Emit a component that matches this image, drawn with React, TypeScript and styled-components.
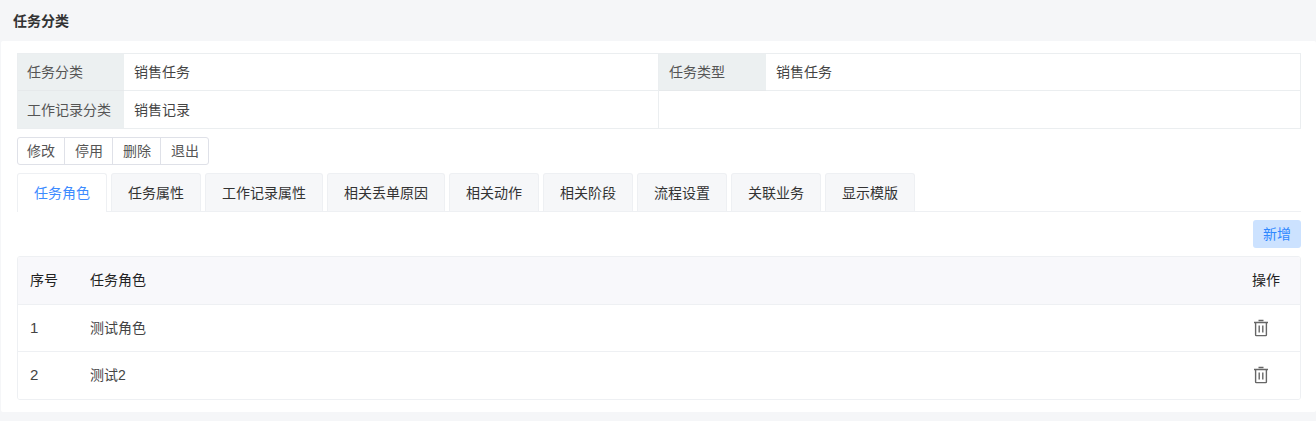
import React from 'react';
import styled, { createGlobalStyle } from 'styled-components';

const Global = createGlobalStyle`
  html, body { margin: 0; padding: 0; background: #f5f6f8; }
  body { font-family: "Liberation Sans", "Noto Sans CJK SC", sans-serif; font-size: 14px; line-height: 20px; color: #333; }
  * { box-sizing: border-box; }
`;

const Page = styled.div`
  width: 1316px;
  height: 421px;
  background: #f5f6f8;
  display: flex;
  flex-direction: column;
  overflow: hidden;
`;

const Header = styled.div`
  height: 41px;
  padding: 0 13px;
  display: flex;
  align-items: center;
  font-size: 14px;
  font-weight: 700;
  color: #333;
`;

const Panel = styled.div`
  margin-left: 1px;
  height: 371px;
  background: #fff;
  border-radius: 2px;
  padding: 12px 15px 0 16px;
`;

const InfoGrid = styled.div`
  display: grid;
  grid-template-columns: 106px 535px 107px 1fr;
  grid-auto-rows: 37px;
  height: 76px;
  border: 1px solid #ebeef0;
`;

const Label = styled.div<{ $last?: boolean; $first?: boolean }>`
  background: #ecf0f1;
  padding-left: ${p => (p.$first ? '9px' : '10px')};
  display: flex;
  align-items: center;
  color: #555;
  border-bottom: ${p => (p.$last ? 'none' : '1px solid #e6e9eb')};
`;

const Value = styled.div<{ $last?: boolean; $end?: boolean; $span?: boolean }>`
  padding-left: 10px;
  display: flex;
  align-items: center;
  color: #444;
  grid-column: ${p => (p.$span ? 'span 2' : 'auto')};
  border-bottom: ${p => (p.$last ? 'none' : '1px solid #ebeef0')};
  border-right: ${p => (p.$end ? 'none' : '1px solid #ebeef0')};
`;

const ButtonGroup = styled.div`
  display: flex;
  width: 192px;
  margin-top: 8px;
  height: 28px;
  border: 1px solid #dfe1e8;
  border-radius: 3px;
  background: #fff;
`;

const GroupButton = styled.button`
  width: 48px;
  margin: 0;
  padding: 0 0 0 1px;
  font: inherit;
  color: #555;
  background: transparent;
  border: none;
  border-left: 1px solid #dfe1e8;
  &:first-child { border-left: none; width: 46px; padding: 0; }
`;

const Tabs = styled.div`
  display: flex;
  gap: 4px;
  margin-top: 8px;
  height: 39px;
  border-bottom: 1px solid #eef0f3;
`;

const Tab = styled.div<{ $active?: boolean; $w: number }>`
  width: ${p => p.$w}px;
  height: ${p => (p.$active ? '39px' : '38px')};
  display: flex;
  align-items: center;
  justify-content: center;
  border: 1px solid #eef0f3;
  border-bottom: none;
  border-radius: 3px 3px 0 0;
  background: ${p => (p.$active ? '#fff' : '#f6f7f9')};
  color: ${p => (p.$active ? '#3d8bff' : '#333')};
`;

const Actions = styled.div`
  display: flex;
  justify-content: flex-end;
  margin-top: 8px;
`;

const AddButton = styled.button`
  width: 48px;
  height: 28px;
  padding: 0;
  font: inherit;
  color: #2f88ff;
  background: #cce2ff;
  border: none;
  border-radius: 3px;
`;

const TableWrap = styled.div`
  margin-top: 8px;
  height: 144px;
  border: 1px solid #eef0f3;
  border-radius: 3px;
  overflow: hidden;
`;

const Row = styled.div<{ $head?: boolean }>`
  display: grid;
  grid-template-columns: 60px 1fr 48px;
  height: ${p => (p.$head ? '48px' : '47px')};
  align-items: center;
  padding: ${p => (p.$head ? '0 0 1px 12px' : '0 0 0 12px')};
  background: ${p => (p.$head ? '#f8f8fb' : '#fff')};
  color: ${p => (p.$head ? '#222' : '#444')};
  border-bottom: 1px solid #eef0f3;
  &:last-child { border-bottom-color: transparent; }
`;

const Digit = styled.span`
  font-size: 15px;
`;

const IconCell = styled.div`
  display: flex;
  align-items: center;
  padding-left: 1px;
  color: #666;
`;

const Trash = () => (
  <svg width="16" height="18" viewBox="0 0 16 18" fill="none" stroke="currentColor" strokeWidth="1.4">
    <path d="M5.5 1.5h5" />
    <path d="M1 3.5h14" />
    <path d="M2.6 3.5v12.4c0 .4.3.7.7.7h9.4c.4 0 .7-.3.7-.7V3.5" />
    <path d="M6.2 6.5v7M9.8 6.5v7" />
  </svg>
);

const tabs: [string, number][] = [
  ['任务角色', 90], ['任务属性', 90], ['工作记录属性', 118], ['相关丢单原因', 118],
  ['相关动作', 90], ['相关阶段', 90], ['流程设置', 90], ['关联业务', 90], ['显示模版', 90],
];

export default function App() {
  return (
    <Page>
      <Global />
      <Header>任务分类</Header>
      <Panel>
        <InfoGrid>
          <Label $first>任务分类</Label>
          <Value>销售任务</Value>
          <Label>任务类型</Label>
          <Value $end>销售任务</Value>
          <Label $first $last>工作记录分类</Label>
          <Value $last>销售记录</Value>
          <Value $last $end $span />
        </InfoGrid>
        <ButtonGroup>
          <GroupButton>修改</GroupButton>
          <GroupButton>停用</GroupButton>
          <GroupButton>删除</GroupButton>
          <GroupButton>退出</GroupButton>
        </ButtonGroup>
        <Tabs>
          {tabs.map(([t, w], i) => (
            <Tab key={t} $w={w} $active={i === 0}>{t}</Tab>
          ))}
        </Tabs>
        <Actions><AddButton>新增</AddButton></Actions>
        <TableWrap>
          <Row $head><span>序号</span><span>任务角色</span><span>操作</span></Row>
          <Row><Digit>1</Digit><span>测试角色</span><IconCell><Trash /></IconCell></Row>
          <Row><Digit>2</Digit><span>测试2</span><IconCell><Trash /></IconCell></Row>
        </TableWrap>
      </Panel>
    </Page>
  );
}
